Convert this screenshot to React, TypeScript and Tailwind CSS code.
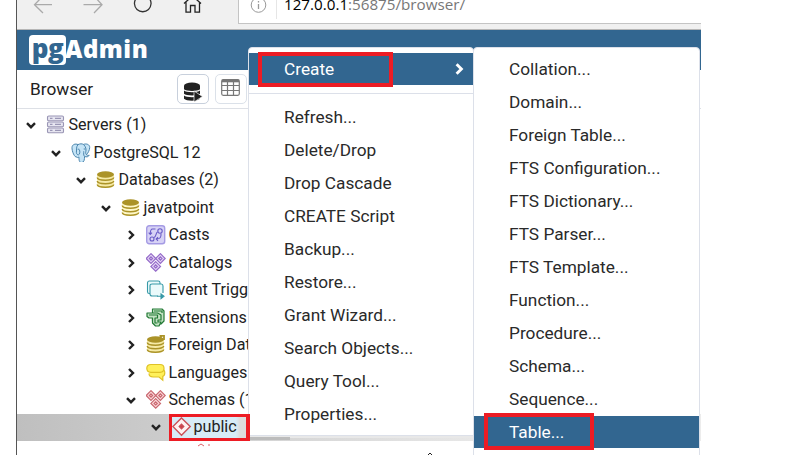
import type { ReactNode } from "react";

const Chevron = ({ open = false, className = "" }: { open?: boolean; className?: string }) => (
  <svg viewBox="0 0 10 10" className={`h-[10px] w-[10px] shrink-0 ${className}`} fill="none" stroke="currentColor" strokeWidth="2.4">
    <path d={open ? "M1 3.2 5 7.2 9 3.2" : "M3 1 7 5 3 9"} />
  </svg>
);

const Disks = ({ pale = false, foreign = false }: { pale?: boolean; foreign?: boolean }) => (
  <g>
    <path d="M1 5v10c0 4 17 4 17 0V5" fill={pale ? "#fff8c8" : "#f6eaa6"} />
    <path d="M1.300 7.500c0 3.600 16.400 3.600 16.400 0M1.300 11c0 3.600 16.400 3.600 16.400 0M1.300 14.500c0 3.600 16.400 3.600 16.400 0" fill="none" stroke="#ab9328" strokeWidth="1.500" />
    <ellipse cx="9.5" cy="4.500" rx="8.5" ry="3.200" fill="#ab9328" />
    {foreign && <path d="M12 4.5 17 0M13.5 .5H18V5" fill="none" stroke="#ab9328" strokeWidth="1.8" />}
  </g>
);

const Trio = ({ color, fill }: { color: string; fill: string }) => (
  <g fill={fill} stroke={color} strokeWidth="1.200">
    {[[5, 5.5], [14.4, 5.5], [9.7, 13.4]].map(([x, y]) => (
      <g key={x}>
        <path d={`M${x} ${y - 4.8}L${x + 4.8} ${y}L${x} ${y + 4.8}L${x - 4.8} ${y}Z`} />
        <path d={`M${x} ${y - 1.6}L${x + 1.6} ${y}L${x} ${y + 1.6}L${x - 1.6} ${y}Z`} />
      </g>
    ))}
  </g>
);

const icons: Record<string, ReactNode> = {
  servers: (
    <g fill="#e6e5f0" stroke="#9a96b5" strokeWidth="1.1">
      {[1, 7, 13].map((y) => (
        <g key={y}>
          <rect x="1.5" y={y} width="16" height="4.8" rx="1.3" />
          <path d={`M4 ${y + 2.4}h2.5M9 ${y + 2.4}h6`} />
        </g>
      ))}
    </g>
  ),
  postgres: (
    <g fill="#c5e4f6" stroke="#4b85ad" strokeWidth="1" strokeLinejoin="round">
      <path d="M6 14C3.5 15 .8 8 1 4.5 1.2 1.3 4.5.4 7 1.6c2-1 4-1 5.5-.2 3-1.2 6.3.2 6.2 3 0 2.5-1.7 5.8-3.2 7.3.8.9 2 .8 2.7.4-.6 1.8-3 2.3-4.6 1.2-.2 3.2-.3 6-2.8 6.2-2.2.1-2.8-1.2-2.9-5.6C7.2 14.8 6.3 14.7 6 14z" />
      <path d="M7 1.6C5 4 5.8 6 5.4 9.3c-.1 1.5 1 2.7 2.2 2.5 1.3-.2 1.5-3.5.8-5.2M12.5 1.4c2.5 2.5 2.8 5 2.3 7.4-.5 1.3.2 2 .7 2.9M13.6 13.3c-1.5-1-.7-3.3-.9-5M6.7 6.2h1.5M12.7 6h1.6" fill="none" />
    </g>
  ),
  databases: <Disks />,
  database: <Disks pale />,
  casts: (
    <g fill="none" stroke="#695bc7" strokeWidth="1.1">
      <rect x=".7" y=".7" width="18" height="18" rx="2.5" fill="#d7d2f5" stroke="#a59be4" strokeWidth="1.400" />
      <circle cx="14" cy="6" r="2.200" />
      <circle cx="6" cy="14" r="2" />
      <path d="M9.500 4H6.500C4.500 4 4.300 6 4.300 9M2.700 7.700l1.600 1.800L6 7.700M15 8.500c.3 4-1 5.500-4.500 5.500M12 12.200 10.200 14l1.800 1.800M8 12.500c2.500-1 1.500-4.500 3.500-5.500" />
    </g>
  ),
  catalogs: <Trio color="#956bc9" fill="#e4d5f5" />,
  trigger: (
    <g fill="#eafafb" stroke="#3699a7" strokeWidth="1.1">
      <rect x="1.500" y="1" width="12.5" height="12.5" rx="1.8" />
      <path d="M12 16H6.2C5 16 4 15.200 4 14V5.6C4 4.5 5 4 6.2 4h9C16.700 4 17 4.5 17 6v7" />
      <path d="M11 16.300h5M15 14l3 2.300-3 2.300z" fill="#3699a7" />
    </g>
  ),
  extensions: (
    <g fill="#c3e2c3" stroke="#237a36" strokeWidth="1.2" strokeLinejoin="round">
      <path d="M6.500 1H16l2 2v10l-3 3H9L6.500 13z" />
      <path d="M1 5h10.500L15 7v5h-3v2h3l-2 4H9.500L6.500 15V10H3L1 8.500z" />
      <path d="M3 7h8.500v3H9v5h2.500M8 3h8v2" fill="none" />
    </g>
  ),
  foreign: <Disks foreign />,
  languages: (
    <g fill="#fff05a" stroke="#dfc227" strokeWidth="1.200">
      <path d="M5.500 6H15c2.500 0 3.800 1.500 3.800 3.800 0 2-.8 3.200-2 3.600v3.800L13 14H7c-3 0-4-1.500-4-3.500" />
      <path d="M5 1.500h9c3 0 4 1.500 4 3.800s-1.200 4-4 4H5c-3 0-4.200-1.500-4.200-4C.8 3 2.200 1.500 5 1.500z" />
    </g>
  ),
  schemas: <Trio color="#c96870" fill="#fbd7d9" />,
  public: (
    <g stroke="#cb4f57" fill="#fff2f2" strokeWidth="1.4">
      <path d="M9.5.9 18.2 9.5 9.5 18.2.9 9.5z" />
      <path d="M9.5 7.300 11.700 9.5 9.5 11.700 7.300 9.5z" fill="#cb3e48" />
    </g>
  ),
};

const TreeIcon = ({ name }: { name: string }) => (
  <svg viewBox="0 0 19.5 19.5" className="h-[19.5px] w-[19.5px] shrink-0">{icons[name]}</svg>
);

type Node = { label: string; icon: string; indent: string; open?: boolean };
const nodes: Node[] = [
  { label: "Servers (1)", icon: "servers", indent: "pl-[9px]", open: true },
  { label: "PostgreSQL 12", icon: "postgres", indent: "pl-[34px]", open: true },
  { label: "Databases (2)", icon: "databases", indent: "pl-[59px]", open: true },
  { label: "javatpoint", icon: "database", indent: "pl-[84px]", open: true },
  { label: "Casts", icon: "casts", indent: "pl-[109px]" },
  { label: "Catalogs", icon: "catalogs", indent: "pl-[109px]" },
  { label: "Event Trigg", icon: "trigger", indent: "pl-[109px]" },
  { label: "Extensions", icon: "extensions", indent: "pl-[109px]" },
  { label: "Foreign Dat", icon: "foreign", indent: "pl-[109px]" },
  { label: "Languages", icon: "languages", indent: "pl-[109px]" },
  { label: "Schemas (1", icon: "schemas", indent: "pl-[109px]", open: true },
];

const actions = ["Refresh...", "Delete/Drop", "Drop Cascade", "CREATE Script", "Backup...", "Restore...", "Grant Wizard...", "Search Objects...", "Query Tool...", "Properties..."];
const objects = ["Collation...", "Domain...", "Foreign Table...", "FTS Configuration...", "FTS Dictionary...", "FTS Parser...", "FTS Template...", "Function...", "Procedure...", "Schema...", "Sequence..."];

const BrowserBar = () => (
  <div className="flex h-[30px] border-b border-[#b6b6b6] bg-[#f0f0f0]">
    <svg viewBox="0 0 221 24" className="h-6 w-[221px] shrink-0" fill="none" strokeWidth="1.3">
      <path d="M35 4.7H18M26-4 17.5 4.7 26 13M66.500 4.700H85M77-4 85 4.700 77 13" stroke="#aaa" />
      <path d="M119.500-2A8.300 8.300 0 1 0 132-2" stroke="#333" />
      <path d="M167 3.500 175.500-4 184 3.500M169 2v10.200h4.500V5.500h4.500v6.700h4.500V2" stroke="#222" />
    </svg>
    <div className="flex h-6 flex-1 items-start overflow-hidden border-b border-l border-[#c4c4c4] bg-white">
      <svg viewBox="0 0 38 24" className="h-6 w-[38px] shrink-0" fill="none" stroke="#999">
        <circle cx="19.500" cy="5" r="7.300" />
        <path d="M19.500 4v5M19.500 1v1.500" strokeWidth="1.300" />
        <path d="M38 0v19" stroke="#ccc" />
      </svg>
      <div className="-mt-[6px] pl-[7px] font-['Open_Sans',sans-serif] text-[15.2px] leading-5 whitespace-nowrap text-[#777]">
        <span className="text-black">127.0.0.1</span>:56875/browser/
      </div>
    </div>
  </div>
);

const Header = () => (
  <div className="flex h-10 items-center bg-[#326690] pl-[12px] font-['Open_Sans',sans-serif] text-[24px] font-extrabold text-white">
    <div className="flex h-[30px] w-[37px] items-center justify-center rounded-[4px] bg-white text-[26px] leading-none tracking-[-0.5px] text-[#326690]">
      <span className="-mt-[5px]">pg</span>
    </div>
    <span className="-ml-px -mt-[2px] tracking-[0.500px]">Admin</span>
  </div>
);

const Toolbar = () => (
  <div className="flex h-[39px] items-center border-b border-[#dde0e6] pl-[13px] text-[17.250px]">
    <span className="w-[147px] pt-[2px]">Browser</span>
    <div className="flex h-[30px] w-8 items-center justify-center rounded-[5px] border border-[#c8d0dc]">
      <svg viewBox="0 0 20 20" className="mt-[5px] h-5 w-5" fill="#222">
        <path d="M1 4v3.300c2 2.200 14 2.200 16 0V4z" />
        <ellipse cx="9" cy="3.500" rx="8" ry="3" />
        <path d="M1 8.500c2 2.300 14 2.300 16 0v3.300c-2 2.300-14 2.300-16 0z" />
        <path d="M1 13.500c2 2.300 14 2.300 16 0v3.300c-2 2.600-14 2.600-16 0z" />
        <path d="m11 9 8.500 5.500L11 20z" stroke="#fff" strokeWidth=".7" />
      </svg>
    </div>
    <div className="ml-[6px] flex h-[30px] w-8 items-center justify-center rounded-[5px] border border-[#dbe1e9]">
      <svg viewBox="0 0 19 17" className="mr-[2px] mb-[3px] h-[17px] w-[19px]" fill="none" stroke="#777" strokeWidth="1.200">
        <rect x=".7" y=".7" width="17.600" height="15.600" rx="1.500" />
        <path d="M1 2h17" strokeWidth="2.600" />
        <path d="M1 6.500h17M1 11.500h17M6.500 1v15M12.500 1v15" />
      </svg>
    </div>
  </div>
);

const Tree = () => (
  <div className="pt-[2px] text-[16.100px] text-[#222]">
    {nodes.map((n) => (
      <div key={n.label} className={`flex h-[27.5px] items-center whitespace-nowrap ${n.indent}`}>
        <Chevron open={n.open} className="mt-px" />
        <span className="ml-[10px] flex"><TreeIcon name={n.icon} /></span>
        <span className="ml-[3px] pt-px">{n.label}</span>
      </div>
    ))}
    <div className="flex h-[27px] items-center bg-linear-to-r from-[#bfbfbf] to-[#ececec] to-75% pl-[134px]">
      <Chevron open />
      <span className="ml-[8px] flex h-[27px] w-[81px] items-center border-[3px] border-[#ed1c24] bg-linear-to-r from-[#d7ecf7] from-85% to-[#ddd] to-90%">
        <TreeIcon name="public" />
        <span className="ml-[2px]">public</span>
      </span>
    </div>
    <svg viewBox="0 0 20 4" className="mt-[2px] ml-[176px] h-1 w-5" fill="none" stroke="#df6268">
      <path d="m5 3 3-2 3 2M15 2h2" />
    </svg>
  </div>
);

const Item = ({ label }: { label: string }) => <div className="flex h-[33.050px] items-center pl-[35px]">{label}</div>;

export default function App() {
  return (
    <div className="h-[476px] w-[806px] overflow-hidden bg-white pl-4 font-[Roboto,sans-serif] text-[#222]">
      <div className="relative h-[455px] w-[685px] overflow-hidden border-l border-[#555] bg-white">
        <BrowserBar />
        <Header />
        <Toolbar />
        <Tree />
        <svg viewBox="0 0 230 20" className="absolute top-[435px] left-[231px] h-5 w-[230px]">
          <path d="M0 0h225v3H0z" fill="#e8e8e8" />
          <path d="M0 2h42v3H0z" fill="#bcbcbc" />
          <path d="m180 20 2-2 2 2" fill="none" stroke="#222" />
        </svg>
        <div className="absolute top-[47px] left-[231px] h-[389px] w-[226px] rounded-t-[4px] border border-[#dce0e9] bg-white text-[17.250px] text-[#2a2a2a]">
          <div className="mt-[5px] flex h-[32px] items-center justify-between bg-[#326690] pr-[8px] text-white">
            <div className="ml-[9px] flex h-[35px] w-[135px] items-center border-4 border-[#ed1c24] pt-[2px] pl-[22px]">Create</div>
            <Chevron className="h-[12px] w-[12px]" />
          </div>
          <div className="mt-[8px] mb-[7px] border-t border-[#dce0e9]" />
          {actions.map((label) => <Item key={label} label={label} />)}
        </div>
        <div className="absolute top-[47px] left-[456px] h-[420px] w-[227px] rounded-t-[4px] border border-[#dce0e9] bg-white pt-[5px] text-[17.250px] text-[#2a2a2a]">
          {objects.map((label) => <Item key={label} label={label} />)}
          <div className="-mt-px flex h-[32px] items-center bg-[#326690] text-white">
            <div className="ml-[10px] flex h-[37px] w-[110px] shrink-0 items-center border-4 border-[#ed1c24] pt-[2px] pl-[21px]">Table...</div>
          </div>
        </div>
        <div className="absolute top-[414px] left-[229px] h-[27px] w-[4px] bg-[#ed1c24]" />
      </div>
    </div>
  );
}
